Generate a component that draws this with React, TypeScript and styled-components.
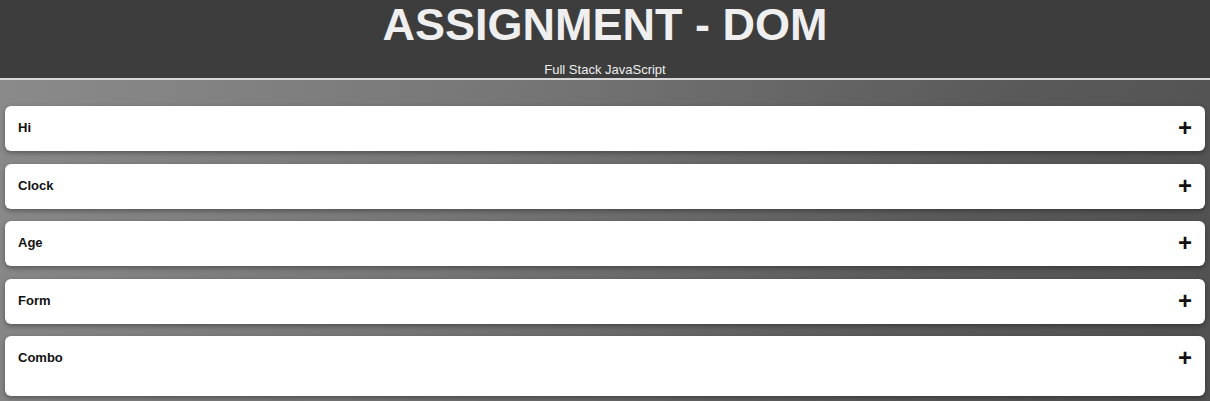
import React from "react";
import styled, { createGlobalStyle } from "styled-components";

const Global = createGlobalStyle`
  html, body { margin: 0; padding: 0; }
  body {
    font-family: "Liberation Sans", Arial, sans-serif;
    background: linear-gradient(115deg, #8c8c8c 0%, #767676 40%, #5a5a5a 75%, #505050 100%);
    min-height: 401px;
  }
`;

const Header = styled.header`
  background: #3d3d3d;
  border-bottom: 2px solid #d8d8d8;
  text-align: center;
  color: #efefef;
  height: 80px;
  box-sizing: border-box;
  padding-top: 1px;
`;

const Title = styled.h1`
  margin: 0;
  font-size: 45px;
  font-weight: bold;
  line-height: 48px;
`;

const Subtitle = styled.div`
  font-size: 13px;
  margin-top: 13px;
  line-height: 15px;
`;

const List = styled.main`
  display: flex;
  flex-direction: column;
  gap: 12.5px;
  padding: 26px 5px 5px;
`;

const Card = styled.section<{ $tall?: boolean }>`
  background: #fff;
  border-radius: 6px;
  box-shadow: 0 2px 5px rgba(0, 0, 0, 0.35);
  display: flex;
  justify-content: space-between;
  align-items: flex-start;
  padding: 14px 13px 15px 13px;
  height: ${(p) => (p.$tall ? "60px" : "45px")};
  box-sizing: border-box;
`;

const Label = styled.span`
  font-size: 13px;
  font-weight: bold;
  color: #111;
  line-height: 16px;
`;

const Plus = styled.span`
  font-size: 24px;
  font-weight: bold;
  line-height: 16px;
  color: #111;
`;

const items = ["Hi", "Clock", "Age", "Form", "Combo"];

export default function App() {
  return (
    <>
      <Global />
      <Header>
        <Title>ASSIGNMENT - DOM</Title>
        <Subtitle>Full Stack JavaScript</Subtitle>
      </Header>
      <List>
        {items.map((it) => (
          <Card key={it} $tall={it === "Combo"}>
            <Label>{it}</Label>
            <Plus>+</Plus>
          </Card>
        ))}
      </List>
    </>
  );
}
